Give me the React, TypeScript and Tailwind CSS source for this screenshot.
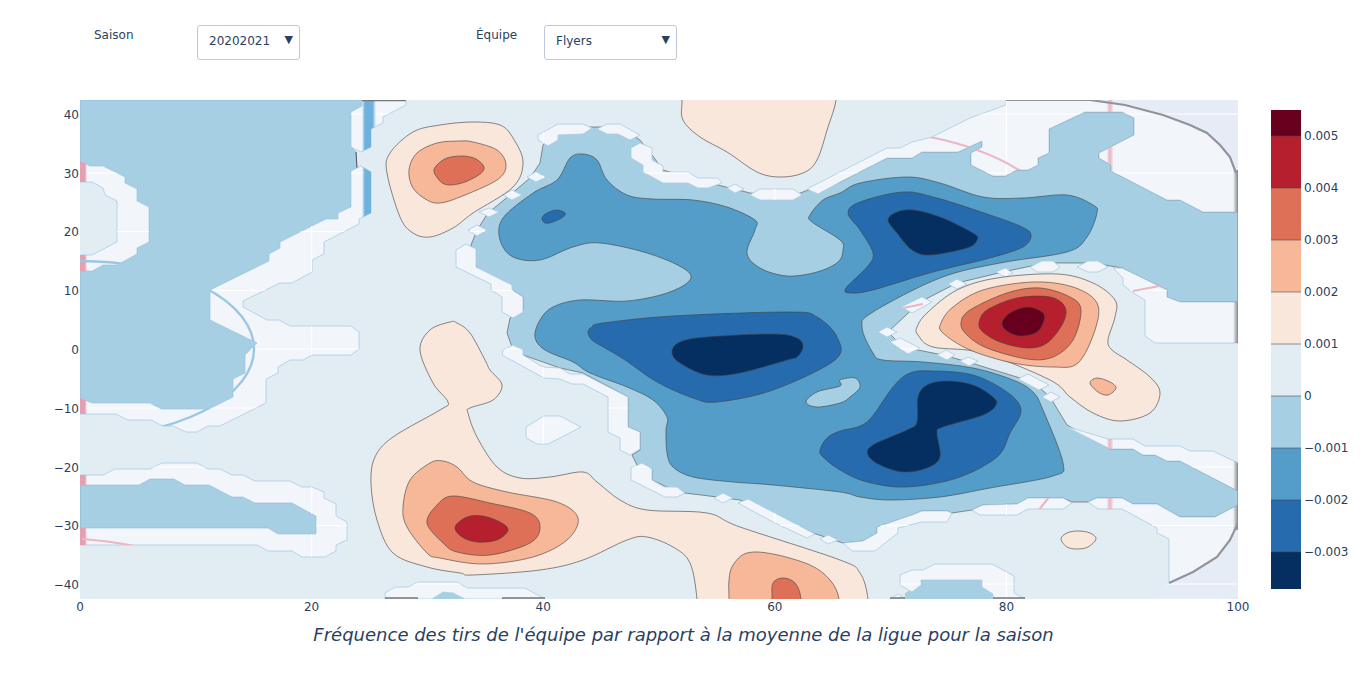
import React from 'react';

const NAVY = '#2a3f5f';
const FONT = { fontFamily: '"DejaVu Sans", sans-serif' };

// polygons are written in page pixels, the svg viewBox starts at y=100
const LEFT_BLUE = '80,100 362,100 362,106 351,112 351,147 356,152 357,168 351,171 351,207 338,213 338,219 326,219 280,242 280,248 269,254 269,261 210,290 210,320 257,343 245,355 245,373 233,379 233,397 209,409 161,409 150,403 92,403 80,398 80,271 92,271 103,265 117,265 137,254 137,248 149,242 149,207 137,201 137,189 125,183 125,177 103,166 90,166 80,161';
const LOW_BLUE = '80,485 139,485 150,479 174,479 185,485 209,485 232,497 243,497 255,503 292,503 316,516 316,534 278,534 268,528 80,528';
const BOTTOM_BLUE = ['418,599 432,599 443,592 453,593 465,599', '921,580 982,580 982,587 993,594 993,599 905,599 905,593 921,585'];
const CENTER_BLUE = '543,145 558,128 583,127 620,127 640,140 652,155 663,170 690,178 722,186 750,193 790,197 808,190 840,182 887,158 912,158 922,152 958,152 982,141 982,147 971,153 971,165 993,176 1005,176 1017,170 1028,170 1038,165 1038,158 1049,153 1049,129 1085,112 1122,112 1134,118 1134,135 1099,153 1099,158 1111,165 1111,171 1167,200 1180,200 1203,212 1238,212 1238,302 1180,302 1167,297 1167,290 1122,268 1093,263 1045,263 1003,272 957,283 920,302 888,332 903,347 943,355 968,362 1033,382 1050,397 1067,425 1110,449 1133,449 1143,455 1155,455 1167,461 1180,461 1238,491 1238,505 1215,517 1180,517 1157,504 1133,504 1122,498 1097,498 1088,502 1072,502 1063,498 1028,498 1017,504 983,505 972,510 952,513 947,511 922,511 912,515 877,527 877,533 863,541 843,543 813,533 740,500 717,497 685,493 667,487 652,480 652,470 637,465 632,455 640,450 640,432 628,427 628,397 583,373 560,368 523,355 512,347 507,333 510,318 523,310 523,297 512,290 476,267 471,245 477,230 488,213 510,195 530,178 540,163';

const CORNERS = [
  '1006,100 1090,100 1125,105 1163,115 1190,125 1207,133 1220,145 1230,157 1236,173 1238,185 1238,100',
  '1169,583 1193,572 1217,557 1230,540 1238,523 1238,599 1157,599 1157,592',
];

const PALE = [
  '80,161 90,166 103,166 125,177 125,183 137,189 137,201 149,207 149,242 137,248 137,254 117,265 103,265 92,271 80,271 80,255 92,255 117,242 117,201 105,195 103,188 92,182 80,182',
  '362,100 406,100 406,105 383,117 383,123 371,129 371,147 361,152 351,147 351,112 362,106',
  '351,171 361,166 371,172 371,213 359,219 359,224 324,242 324,254 312,260 312,272 292,283 280,283 243,301 243,307 267,320 279,320 290,326 351,326 359,332 359,349 351,355 312,355 303,360 290,360 278,367 278,373 266,379 266,403 220,426 208,426 197,432 186,432 173,426 163,426 151,420 128,420 116,414 80,414 80,398 92,403 150,403 161,409 209,409 233,397 233,379 245,373 245,355 257,343 210,320 210,290 269,261 269,254 280,248 280,242 326,219 338,219 338,213 351,207',
  '80,475 103,475 115,469 150,469 162,463 197,463 208,469 220,469 232,475 243,475 255,481 290,481 302,487 312,487 324,492 324,498 336,504 336,516 347,522 347,540 336,545 336,551 325,557 302,557 292,551 268,551 257,545 80,545 80,528 268,528 278,534 316,534 316,516 292,503 255,503 243,497 232,497 209,485 185,485 174,479 150,479 139,485 80,485',
  '385,599 385,593 395,587 408,587 418,582 457,582 467,588 525,588 545,599 465,599 453,593 443,592 432,599',
  '900,575 912,570 923,570 935,564 992,564 1003,570 1014,576 1014,593 1025,599 993,599 993,594 982,587 982,580 921,580 921,585 912,592 900,585',
  '890,599 898,594 905,599',
  '538,135 558,124 583,124 592,128 583,134 558,135 558,140 548,146 538,140',
  '597,129 607,124 620,124 640,135 630,140 618,134 607,134',
  '631,148 640,143 652,148 652,160 663,166 663,172 688,172 698,178 718,178 722,183 708,188 698,188 688,183 663,183 643,172 643,165 631,158',
  '727,188 735,184 744,189 735,193',
  '750,195 760,189 793,189 802,195 793,200 760,200',
  '807,189 840,172 887,148 900,148 912,142 932,137 970,118 1006,105 1006,100 1090,100 1125,105 1163,115 1190,125 1207,133 1220,145 1230,157 1236,173 1238,185 1238,212 1203,212 1180,200 1167,200 1111,171 1111,165 1099,158 1099,153 1134,135 1134,118 1122,112 1085,112 1049,129 1049,153 1038,158 1038,165 1028,170 1017,170 1005,176 993,176 971,165 971,153 982,147 982,141 958,152 922,152 912,158 887,158 840,182 818,194',
  '527,177 536,172 546,177 536,182',
  '503,195 512,190 522,195 512,200',
  '479,212 489,208 499,212 489,217',
  '468,230 477,225 487,230 477,236',
  '456,250 466,244 476,249 476,267 512,285 512,290 523,297 523,312 513,318 502,312 502,297 491,290 491,284 456,267',
  '503,350 513,345 523,350 523,355 543,367 560,368 570,374 583,374 628,397 628,427 640,432 640,449 630,455 620,450 620,438 608,432 608,397 583,384 572,384 560,379 544,378 502,355',
  '631,468 642,463 652,469 652,480 664,487 677,487 685,493 677,497 665,497 631,480',
  '714,498 723,493 733,498 723,503',
  '738,503 748,499 815,534 807,538 773,522',
  '820,539 828,535 838,540 828,544',
  '843,543 863,541 877,533 877,527 912,515 922,511 947,511 952,513 947,522 922,522 898,528 898,533 875,551 852,551',
  '972,510 983,505 1017,504 1028,498 1063,498 1072,503 1063,509 1028,509 1017,515 980,515',
  '1088,502 1097,498 1122,498 1133,504 1157,504 1180,517 1215,517 1238,505 1238,523 1230,540 1217,557 1193,572 1169,583 1169,539 1157,533 1157,528 1122,509 1098,509',
  '1065,426 1108,439 1133,439 1145,446 1180,446 1190,451 1213,451 1238,463 1238,491 1180,461 1167,461 1155,455 1143,455 1133,449 1110,449',
  '1113,268 1122,268 1167,290 1167,297 1180,302 1238,302 1238,343 1155,343 1145,336 1145,300 1135,294 1123,285 1123,278',
  '1030,267 1042,261 1053,261 1060,267 1053,272 1037,272',
  '1077,267 1088,261 1098,261 1108,267 1098,272 1088,272',
  '996,272 1005,268 1013,273 1005,277',
  '948,284 957,279 967,284 957,289',
  '901,307 922,297 932,302 912,313',
  '878,332 887,327 897,332 887,337',
  '890,342 900,338 920,348 908,354',
  '937,355 946,350 955,355 947,360',
  '960,361 968,357 978,361 969,366',
  '1018,379 1028,374 1049,385 1039,390',
  '1042,397 1051,392 1060,397 1051,402',
  '526,427 544,416 560,416 581,427 560,438 548,444 537,444 526,438',
];

const L1 = '#fae7dc';
const L2 = '#f7b799';
const L3 = '#df7058';
const L4 = '#b61f2e';
const L5 = '#67001f';
const B0 = '#a6cfe3';
const B1 = '#539dc8';
const B2 = '#256bae';
const B3 = '#062f61';

const CONTOURS: [string, string][] = [
  [L1, '387,173 390,153 413,132 440,125 473,122 500,125 513,138 523,162 513,187 473,213 453,228 430,237 413,233 400,217'],
  [L2, '409,170 417,153 437,143 460,141 473,142 497,150 506,165 497,180 460,197 440,203 427,200 413,188'],
  [L3, '434,172 437,165 447,158 463,156 476,159 484,167 480,174 465,182 450,185 441,182'],
  [L1, '682,70 682,100 683,120 700,137 727,152 757,172 780,177 803,173 817,160 828,127 836,100 836,70'],
  [L1, '420,350 430,330 450,322 457,323 470,333 485,360 490,370 502,385 493,400 470,408 468,413 477,437 497,467 520,478 550,477 583,472 597,482 620,500 647,510 707,513 740,527 840,560 860,573 868,599 868,630 697,630 697,599 690,563 673,547 647,537 627,540 583,560 540,570 473,575 460,573 427,567 393,553 377,520 371,483 375,457 393,437 440,410 448,402 433,383'],
  [L2, '403,507 410,480 430,463 443,461 457,467 473,482 507,492 557,502 578,518 567,540 533,557 483,564 440,558 427,553 407,527'],
  [L3, '427,523 437,505 453,496 490,503 530,513 540,527 530,543 490,555 457,552 443,543'],
  [L4, '455,527 467,517 483,516 500,522 508,530 497,540 477,542 462,537'],
  [L2, '729,630 729,599 729,580 733,565 747,553 773,554 810,565 830,580 839,599 839,630'],
  [L3, '772,630 772,599 773,583 783,578 795,583 801,599 801,630'],
  [L1, '1061,539 1067,533 1078,531 1090,533 1096,539 1088,547 1077,549 1067,547'],
  [L1, '917,327 927,313 957,290 997,278 1057,274 1093,283 1115,300 1115,317 1108,340 1112,350 1127,360 1150,377 1160,393 1150,413 1120,421 1093,413 1070,397 1050,380 983,353 933,347 918,335'],
  [L2, '941,323 953,307 983,290 1033,282 1073,287 1097,303 1095,330 1078,363 1053,367 1013,363 970,350 943,333'],
  [L3, '961,323 970,310 1007,293 1040,288 1070,297 1081,310 1073,340 1053,357 1027,359 987,348 967,335'],
  [L4, '979,323 987,310 1017,298 1050,297 1065,307 1063,323 1047,343 1027,348 1000,342 983,332'],
  [L5, '1002,323 1010,313 1027,307 1042,312 1044,320 1037,332 1020,336 1007,331'],
  [L2, '1090,383 1097,378 1110,382 1116,388 1108,395 1098,392'],
  [B1, '583,154 597,160 607,180 627,195 653,199 693,200 727,207 755,220 755,230 747,253 760,268 787,276 817,272 838,262 843,250 840,240 812,222 810,215 823,200 840,193 860,183 907,177 940,183 983,197 1023,198 1067,195 1093,205 1097,213 1087,237 1067,252 1000,263 940,278 873,312 862,327 873,353 883,360 923,362 973,368 1013,380 1033,392 1043,410 1063,463 1053,476 990,488 940,497 890,500 860,497 840,492 773,485 733,482 693,477 673,467 667,453 666,430 667,417 653,400 627,387 590,373 573,362 545,350 535,337 540,320 553,307 580,300 627,301 667,293 690,280 683,268 647,253 600,243 573,247 540,260 513,257 500,240 503,218 533,193 557,180 570,158'],
  [B0, '840,386 817,392 806,402 817,407 840,403 850,397 860,387 855,378 840,380'],
  [B2, '588,332 592,327 603,323 673,316 790,312 817,317 837,337 835,360 773,390 717,402 693,398 657,382 625,360 605,348 592,340'],
  [B3, '672,352 680,342 707,337 773,334 797,338 803,347 797,357 787,360 740,373 707,375 680,363'],
  [B2, '542,218 547,213 557,210 565,213 563,217 553,222 545,223'],
  [B2, '848,213 860,202 903,192 937,198 990,215 1022,227 1031,235 1023,247 990,258 933,272 873,290 850,293 846,288 867,267 873,253 860,230'],
  [B3, '888,220 897,212 913,210 940,217 973,233 977,240 967,248 930,255 912,250 897,233'],
  [B2, '840,431 867,422 893,387 910,373 933,371 973,375 1007,392 1021,410 1010,433 997,457 957,478 907,487 867,482 840,470 823,457 820,450 827,438'],
  [B3, '917,422 918,397 927,385 947,381 973,385 993,397 996,405 983,415 943,427 937,433 940,457 927,468 903,472 880,465 868,455 873,445 907,430'],
];

// closed catmull-rom through the points, contour lines are smooth in the picture
function smooth(points: string) {
  const p = points.split(' ').map((s) => s.split(',').map(Number));
  const n = p.length;
  let d = `M${p[0][0]} ${p[0][1]}`;
  for (let i = 0; i < n; i++) {
    const a = p[(i - 1 + n) % n];
    const b = p[i];
    const c = p[(i + 1) % n];
    const e = p[(i + 2) % n];
    const c1x = b[0] + (c[0] - a[0]) / 6;
    const c1y = b[1] + (c[1] - a[1]) / 6;
    const c2x = c[0] - (e[0] - b[0]) / 6;
    const c2y = c[1] - (e[1] - b[1]) / 6;
    d += `C${c1x.toFixed(1)} ${c1y.toFixed(1)} ${c2x.toFixed(1)} ${c2y.toFixed(1)} ${c[0]} ${c[1]}`;
  }
  return d + 'Z';
}

const X_TICKS: [number, string][] = [[80, '0'], [311.6, '20'], [543.2, '40'], [774.8, '60'], [1006.4, '80'], [1238, '100']];
const Y_TICKS: [number, string][] = [[114, '40'], [173, '30'], [231.5, '20'], [290.5, '10'], [349, '0'], [408, '−10'], [467, '−20'], [525.5, '−30'], [584, '−40']];
const BAR: [number, number, string][] = [
  [110, 136, L5], [136, 188, L4], [188, 240, L3], [240, 292, L2], [292, 344, L1],
  [344, 396, '#e1ecf3'], [396, 448, B0], [448, 500, B1], [500, 552, B2], [552, 589, B3],
];
const BAR_TICKS: [number, string][] = [[136, '0.005'], [188, '0.004'], [240, '0.003'], [292, '0.002'], [344, '0.001'], [396, '0'], [448, '−0.001'], [500, '−0.002'], [552, '−0.003']];

function Dropdown({ value, width }: { value: string; width: string }) {
  return (
    <div className={`mt-[25px] flex h-[35px] ${width} items-center justify-between rounded-[3px] border border-[#bec8d9] bg-white pl-[11px] pr-[6px] text-xs text-[#2a3f5f]`}>
      <span className="mb-[3px]">{value}</span>
      <span className="mb-[7px] text-[11px] leading-none">▼</span>
    </div>
  );
}

function ContourChart() {
  return (
    <svg width="1368" height="579" viewBox="0 100 1368 579" className="block" style={FONT}>
      <defs>
        <clipPath id="plot">
          <rect x="80" y="100" width="1158" height="499" />
        </clipPath>
        <clipPath id="rink">
          {PALE.concat(CORNERS).map((p, i) => (
            <polygon key={i} points={p} />
          ))}
        </clipPath>
        <linearGradient id="blueLine">
          <stop offset="0" stopColor="#6fb1dd" stopOpacity="0" />
          <stop offset="0.2" stopColor="#6fb1dd" />
          <stop offset="0.75" stopColor="#6fb1dd" />
          <stop offset="1" stopColor="#6fb1dd" stopOpacity="0" />
        </linearGradient>
        <linearGradient id="redLine">
          <stop offset="0" stopColor="#e59fb1" />
          <stop offset="0.7" stopColor="#e59fb1" />
          <stop offset="1" stopColor="#e59fb1" stopOpacity="0" />
        </linearGradient>
        <linearGradient id="redLineMid">
          <stop offset="0" stopColor="#eab3c1" stopOpacity="0.2" />
          <stop offset="0.5" stopColor="#eab3c1" />
          <stop offset="1" stopColor="#eab3c1" stopOpacity="0.2" />
        </linearGradient>
        <linearGradient id="edge">
          <stop offset="0" stopColor="#85858f" stopOpacity="0" />
          <stop offset="1" stopColor="#85858f" />
        </linearGradient>
      </defs>

      <g clipPath="url(#plot)">
        <rect x="80" y="100" width="1158" height="499" fill="#e1ecf3" />
        {CORNERS.map((p) => (
          <polygon key={p} points={p} fill="#e5ecf6" />
        ))}

        <polygon points={LEFT_BLUE} fill={B0} stroke="#8fbcd9" strokeWidth="0.8" />
        <polygon points={LOW_BLUE} fill={B0} stroke="#84b3d3" strokeWidth="0.8" />
        {BOTTOM_BLUE.map((p) => (
          <polygon key={p} points={p} fill={B0} />
        ))}
        <polygon points={CENTER_BLUE} fill={B0} stroke="#555" strokeWidth="0.9" strokeOpacity="0.7" />
        <path d="M356 152 L357 168" stroke="#555" strokeWidth="1" fill="none" />

        {PALE.map((p) => (
          <polygon key={p} points={p} fill="#f2f5fa" stroke="#a8cbe3" strokeWidth="0.8" />
        ))}

        <g clipPath="url(#rink)">
          <g stroke="#fff" strokeWidth="1.2">
            {[311.6, 543.2, 774.8, 1006.4].map((x) => (
              <line key={x} x1={x} x2={x} y1="100" y2="599" />
            ))}
            {Y_TICKS.map(([y]) => (
              <line key={y} x1="80" x2="1238" y1={y} y2={y} />
            ))}
          </g>
          <rect x="362" y="100" width="14" height="499" fill="url(#blueLine)" />
          <rect x="80" y="100" width="7" height="499" fill="url(#redLine)" />
          <rect x="1107" y="100" width="6" height="499" fill="url(#redLineMid)" />
          <ellipse cx="80" cy="349" rx="174" ry="88" fill="none" stroke="#9ac8e3" strokeWidth="2.4" />
          <g fill="none" stroke="#ecb6c3" strokeWidth="2.2">
            <path d="M930 137 Q985 148 1022 172" />
            <path d="M1133 291 L1170 284" />
            <path d="M903 308 L923 304" />
            <path d="M1039 510 L1049 497" />
            <path d="M82 539 Q110 541 135 546" />
          </g>
          <rect x="1233" y="170" width="5" height="360" fill="url(#edge)" />
          <path
            d="M1006 100 L1090 100 L1125 105 L1163 115 L1190 125 L1207 133 L1220 145 L1230 157 L1236 173 M1238 523 L1230 540 L1217 557 L1193 572 L1169 583"
            fill="none"
            stroke="#93939c"
            strokeWidth="2.2"
          />
        </g>

        <g fill="none" stroke="#777" strokeWidth="1.6">
          <path d="M362 100.5 H406" />
          <path d="M385 598 H418 M502 598 H545 M890 598 H905 M993 598 H1025" />
        </g>

        {CONTOURS.map(([fill, pts], i) => (
          <path key={i} d={smooth(pts)} fill={fill} stroke="#444" strokeOpacity="0.7" strokeWidth="0.9" />
        ))}
      </g>

      <g fontSize="12" fill={NAVY}>
        {X_TICKS.map(([x, t]) => (
          <text key={t} x={x} y="611" textAnchor="middle">{t}</text>
        ))}
        {Y_TICKS.map(([y, t]) => (
          <text key={t} x="79" y={y + 4.5} textAnchor="end">{t}</text>
        ))}
      </g>

      {BAR.map(([y1, y2, fill]) => (
        <rect key={y1} x="1271" y={y1} width="30" height={y2 - y1} fill={fill} />
      ))}
      {BAR_TICKS.map(([y, t]) => (
        <g key={t}>
          <line x1="1271" x2="1301" y1={y} y2={y} stroke="#444" strokeOpacity="0.55" strokeWidth="1" />
          <text x="1304" y={y + 4} fontSize="12" fill={NAVY}>{t}</text>
        </g>
      ))}

      <text x="683.5" y="641" textAnchor="middle" fontSize="18" fontStyle="italic" fill={NAVY}>
        Fréquence des tirs de l'équipe par rapport à la moyenne de la ligue pour la saison
      </text>
    </svg>
  );
}

export default function App() {
  return (
    <div className="h-[679px] w-[1368px] overflow-hidden bg-white" style={FONT}>
      <div className="flex h-[100px] items-start text-xs text-[#2a3f5f]">
        <div className="ml-[94px] mt-[27px] w-[103px]">Saison</div>
        <Dropdown value="20202021" width="w-[103px]" />
        <div className="ml-[176px] mt-[27px] w-[68px]">Équipe</div>
        <Dropdown value="Flyers" width="w-[133px]" />
      </div>
      <ContourChart />
    </div>
  );
}
